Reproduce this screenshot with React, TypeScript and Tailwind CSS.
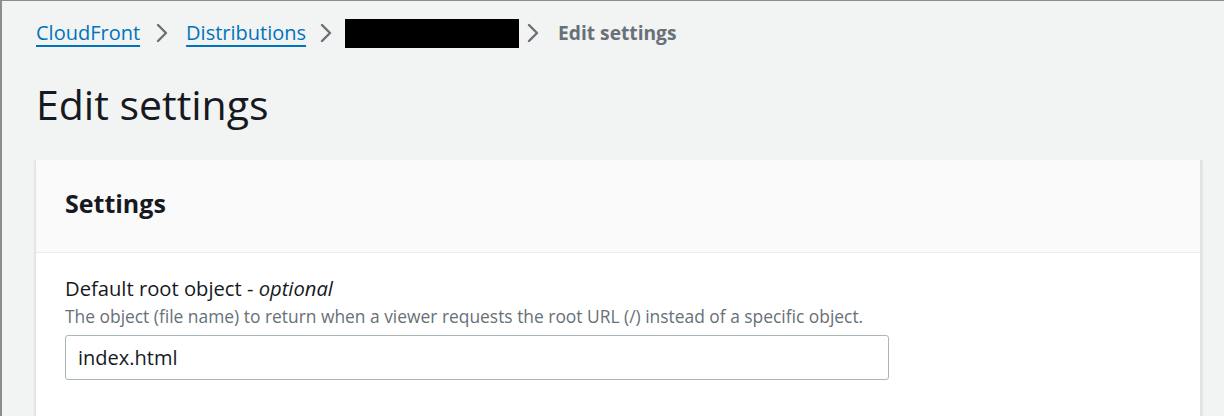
import React from 'react';

const ChevronRight = () => (
  <svg width="12" height="20" viewBox="0 0 12 20" fill="none" className="shrink-0">
    <path d="M2 2l8 8-8 8" stroke="#687078" strokeWidth="2.4" strokeLinecap="round" strokeLinejoin="round" />
  </svg>
);

export default function App() {
  return (
    <div
      className="h-[416px] w-[1224px] overflow-hidden border-t border-l-2 border-[#8d8d8d] bg-[#f2f3f3] pl-[34px] pr-[22px] text-[#16191f]"
      style={{ fontFamily: '"Open Sans", "Noto Sans", Arial, sans-serif' }}
    >
      {/* Breadcrumbs */}
      <nav className="flex h-[64px] items-center text-[20px]">
        <a href="#" className="text-[#0073bb] underline decoration-[1.5px] underline-offset-[5px]">
          CloudFront
        </a>
        <span className="mr-[18px] ml-[16px]">
          <ChevronRight />
        </span>
        <a href="#" className="text-[#0073bb] underline decoration-[1.5px] underline-offset-[5px]">
          Distributions
        </a>
        <span className="mr-[13px] ml-[14px]">
          <ChevronRight />
        </span>
        <div className="h-[29px] w-[174px] bg-black" />
        <span className="mr-[19px] ml-[8px]">
          <ChevronRight />
        </span>
        <span className="text-[19.2px] font-bold text-[#687078]">Edit settings</span>
      </nav>

      {/* Title */}
      <h1 className="pt-[14px] text-[41px] leading-[50px] font-normal">Edit settings</h1>

      {/* Card */}
      <section className="mt-[31px] ml-[-1px] border-l border-r-[2px] border-[#e1e3e3] bg-white shadow-[0_1px_2px_rgba(0,28,36,0.15)]">
        <header className="flex h-[93px] items-center border-b border-[#eaeded] bg-[#fafafa] px-[29px] pb-[4px]">
          <h2 className="text-[25px] font-bold">Settings</h2>
        </header>
        <div className="px-[29px] pt-[20px] pb-[40px]">
          <label className="block text-[20.2px] leading-[30px] text-[#16191f]">
            Default root object - <i>optional</i>
          </label>
          <p className="text-[17.4px] leading-[26px] text-[#687078]">
            The object (file name) to return when a viewer requests the root URL (/) instead of a specific object.
          </p>
          <div className="mt-[6px] flex h-[45px] w-[824px] items-center rounded-[3px] border border-[#aab7b8] bg-white px-[12px] text-[20px]">
            index.html
          </div>
        </div>
      </section>
    </div>
  );
}
